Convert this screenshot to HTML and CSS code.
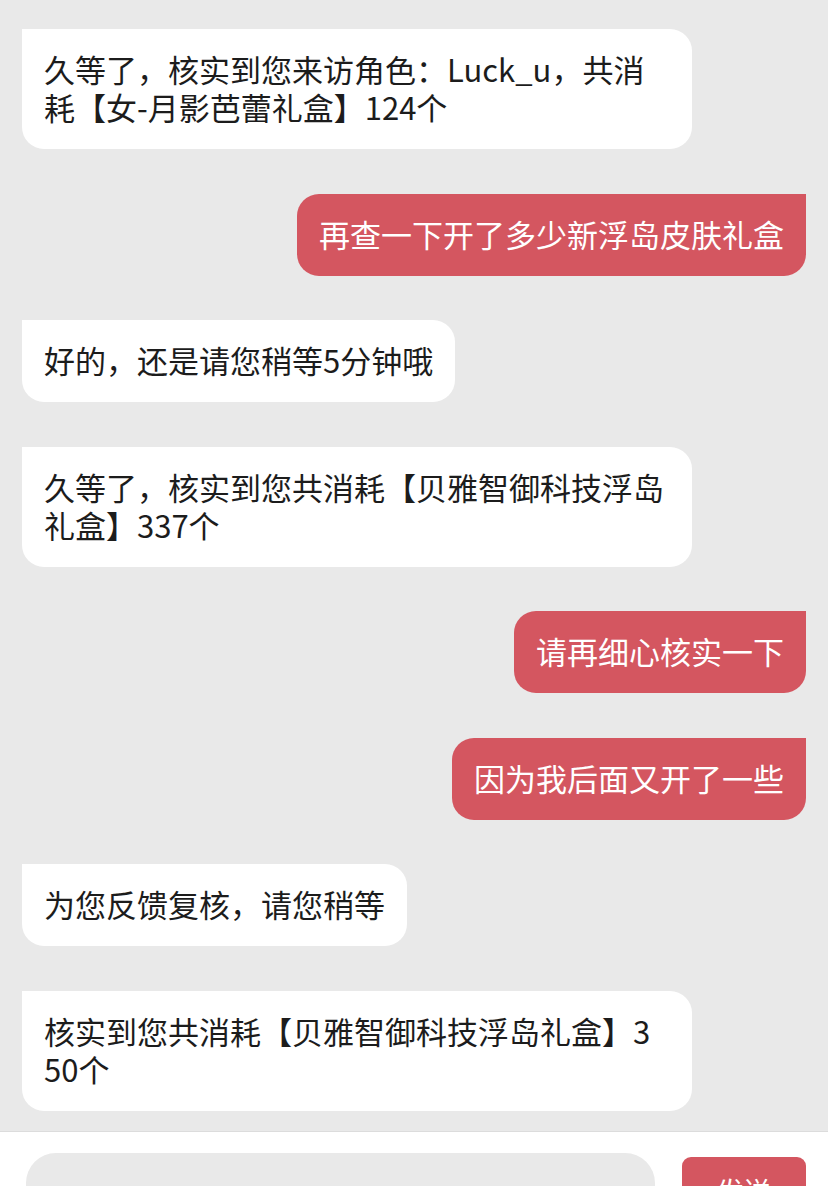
FILE: index.html
```html
<!DOCTYPE html>
<html lang="zh-CN">
<head>
<meta charset="utf-8">
<link rel="stylesheet" href="styles.css">
</head>
<body>
<div class="chat">
  <div class="msg left"><div class="bubble">久等了，核实到您来访角色：Luck_u，共消耗【女-月影芭蕾礼盒】124个</div></div>
  <div class="msg right"><div class="bubble">再查一下开了多少新浮岛皮肤礼盒</div></div>
  <div class="msg left"><div class="bubble">好的，还是请您稍等5分钟哦</div></div>
  <div class="msg left"><div class="bubble">久等了，核实到您共消耗【贝雅智御科技浮岛礼盒】337个</div></div>
  <div class="msg right"><div class="bubble">请再细心核实一下</div></div>
  <div class="msg right"><div class="bubble">因为我后面又开了一些</div></div>
  <div class="msg left"><div class="bubble">为您反馈复核，请您稍等</div></div>
  <div class="msg left"><div class="bubble">核实到您共消耗【贝雅智御科技浮岛礼盒】3<span class="keep">50个</span></div></div>
</div>
<div class="inputbar">
  <div class="input"></div>
  <div class="send">发送</div>
</div>
</body>
</html>
```
FILE: styles.css
```css
html, body {
  margin: 0;
  padding: 0;
  height: 1186px;
  overflow: hidden;
  background: #e9e9e9;
  font-family: "Noto Sans CJK SC", "Noto Sans", sans-serif;
}
.chat {
  display: flex;
  flex-direction: column;
  gap: 44.5px;
  padding: 29px 22px 22px;
  height: 1131px;
  box-sizing: border-box;
}
.msg {
  display: flex;
}
.msg.right {
  justify-content: flex-end;
}
.bubble {
  max-width: 626px;
  padding: 21px 22px 23px 22px;
  font-size: 31px;
  line-height: 38px;
  word-break: break-all;
  box-sizing: content-box;
}
.keep {
  white-space: nowrap;
}
.left .bubble {
  background: #ffffff;
  color: #1c1c1c;
  border-radius: 0 22px 22px 22px;
}
.right .bubble {
  background: #d45660;
  color: #ffffff;
  border-radius: 22px 0 22px 22px;
}
.inputbar {
  background: #ffffff;
  border-top: 1px solid #dcdcdc;
  height: 55px;
  display: flex;
  align-items: flex-start;
  padding: 21px 22px 0 26px;
  gap: 27px;
}
.input {
  flex: 1;
  height: 70px;
  background: #e9e9e9;
  border-radius: 30px;
}
.send {
  width: 124px;
  height: 60px;
  margin-top: 4px;
  background: #d45660;
  color: #fff;
  border-radius: 9px;
  font-size: 27px;
  text-align: center;
  padding-top: 14px;
  box-sizing: border-box;
}
```
